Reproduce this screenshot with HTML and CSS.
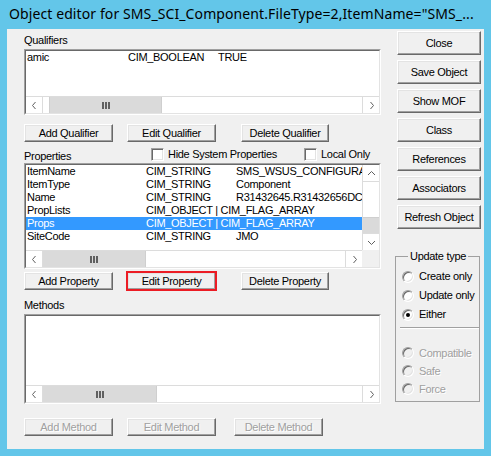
FILE: index.html
```html
<!DOCTYPE html>
<html lang="en">
<head>
<meta charset="utf-8">
<title>Object editor</title>
<link rel="stylesheet" href="styles.css">
</head>
<body>
<div class="window">
  <div class="titlebar">Object editor for SMS_SCI_Component.FileType=2,ItemName="SMS_...</div>
  <div class="client">
    <div class="left">
      <div class="label">Qualifiers</div>
      <div class="listbox qual">
        <div class="inner col">
          <div class="rows">
            <div class="row"><span class="qname">amic</span><span class="qtype">CIM_BOOLEAN</span><span class="val">TRUE</span></div>
          </div>
          <div class="hscroll">
            <span class="arrow aleft"><svg width="7" height="9" viewBox="0 0 7 9"><path d="M4.5 1 L1.5 4.5 L4.5 8" fill="none" stroke="#606060"/></svg></span>
            <span class="thumb thumb-qual"><svg width="8" height="7" viewBox="0 0 8 7"><rect x="0" y="0" width="2" height="7" fill="#606060"/><rect x="3" y="0" width="2" height="7" fill="#606060"/><rect x="6" y="0" width="2" height="7" fill="#606060"/></svg></span>
            <span class="track"></span>
            <span class="arrow aright"><svg width="7" height="9" viewBox="0 0 7 9"><path d="M2.5 1 L5.5 4.5 L2.5 8" fill="none" stroke="#606060"/></svg></span>
          </div>
        </div>
      </div>
      <div class="btnrow">
        <button class="btn">Add Qualifier</button>
        <button class="btn">Edit Qualifier</button>
        <button class="btn third">Delete Qualifier</button>
      </div>
      <div class="propshead">
        <span class="plabel">Properties</span>
        <label class="check hide"><span class="box"></span><span>Hide System Properties</span></label>
        <label class="check"><span class="box"></span><span>Local Only</span></label>
      </div>
      <div class="listbox props">
        <div class="inner grid">
          <div class="rows">
            <div class="row"><span class="pname">ItemName</span><span class="ptype">CIM_STRING</span><span class="val">SMS_WSUS_CONFIGURA</span></div>
            <div class="row"><span class="pname">ItemType</span><span class="ptype">CIM_STRING</span><span class="val">Component</span></div>
            <div class="row"><span class="pname">Name</span><span class="ptype">CIM_STRING</span><span class="val">R31432645.R31432656DC</span></div>
            <div class="row"><span class="pname">PropLists</span><span class="ptype">CIM_OBJECT | CIM_FLAG_ARRAY</span></div>
            <div class="row sel"><span class="pname">Props</span><span class="ptype">CIM_OBJECT | CIM_FLAG_ARRAY</span></div>
            <div class="row"><span class="pname">SiteCode</span><span class="ptype">CIM_STRING</span><span class="val">JMO</span></div>
          </div>
          <div class="vscroll">
            <span class="varrow aup"><svg width="9" height="7" viewBox="0 0 9 7"><path d="M1 5 L4.5 1.5 L8 5" fill="none" stroke="#606060"/></svg></span>
            <span class="track"></span>
            <span class="vthumb"></span>
            <span class="varrow adown"><svg width="9" height="7" viewBox="0 0 9 7"><path d="M1 2 L4.5 5.5 L8 2" fill="none" stroke="#606060"/></svg></span>
          </div>
          <div class="hscroll">
            <span class="arrow aleft"><svg width="7" height="9" viewBox="0 0 7 9"><path d="M4.5 1 L1.5 4.5 L4.5 8" fill="none" stroke="#606060"/></svg></span>
            <span class="thumb thumb-props"><svg width="8" height="7" viewBox="0 0 8 7"><rect x="0" y="0" width="2" height="7" fill="#606060"/><rect x="3" y="0" width="2" height="7" fill="#606060"/><rect x="6" y="0" width="2" height="7" fill="#606060"/></svg></span>
            <span class="track"></span>
            <span class="arrow aright"><svg width="7" height="9" viewBox="0 0 7 9"><path d="M2.5 1 L5.5 4.5 L2.5 8" fill="none" stroke="#606060"/></svg></span>
          </div>
          <div class="corner"></div>
        </div>
      </div>
      <div class="btnrow tight">
        <button class="btn">Add Property</button>
        <button class="btn marked">Edit Property</button>
        <button class="btn third">Delete Property</button>
      </div>
      <div class="label mlabel">Methods</div>
      <div class="listbox meth">
        <div class="inner col">
          <div class="rows"></div>
          <div class="hscroll">
            <span class="arrow aleft"><svg width="7" height="9" viewBox="0 0 7 9"><path d="M4.5 1 L1.5 4.5 L4.5 8" fill="none" stroke="#606060"/></svg></span>
            <span class="thumb thumb-meth"><svg width="8" height="7" viewBox="0 0 8 7"><rect x="0" y="0" width="2" height="7" fill="#606060"/><rect x="3" y="0" width="2" height="7" fill="#606060"/><rect x="6" y="0" width="2" height="7" fill="#606060"/></svg></span>
            <span class="track"></span>
            <span class="arrow aright"><svg width="7" height="9" viewBox="0 0 7 9"><path d="M2.5 1 L5.5 4.5 L2.5 8" fill="none" stroke="#606060"/></svg></span>
          </div>
        </div>
      </div>
      <div class="btnrow methods">
        <button class="btn" disabled>Add Method</button>
        <button class="btn" disabled>Edit Method</button>
        <button class="btn mthird" disabled>Delete Method</button>
      </div>
    </div>
    <div class="right">
      <button class="btn side">Close</button>
      <button class="btn side">Save Object</button>
      <button class="btn side">Show MOF</button>
      <button class="btn side">Class</button>
      <button class="btn side">References</button>
      <button class="btn side">Associators</button>
      <button class="btn side">Refresh Object</button>
      <fieldset class="group">
        <legend>Update type</legend>
        <div class="radio"><span class="dot"></span><span>Create only</span></div>
        <div class="radio"><span class="dot"></span><span>Update only</span></div>
        <div class="radio"><span class="dot on"></span><span>Either</span></div>
        <div class="sep"></div>
        <div class="radio dis"><span class="dot"></span><span>Compatible</span></div>
        <div class="radio dis"><span class="dot"></span><span>Safe</span></div>
        <div class="radio dis"><span class="dot"></span><span>Force</span></div>
      </fieldset>
    </div>
  </div>
</div>
</body>
</html>
```

FILE: styles.css
```css
* { box-sizing: border-box; }
html, body { margin: 0; padding: 0; }
body { background: #63c6e9; }

.window {
  width: 491px;
  height: 456px;
  background: #63c6e9;
  display: flex;
  flex-direction: column;
}

.titlebar {
  height: 29px;
  padding: 4px 0 0 9px;
  font-family: "Noto Sans", sans-serif;
  font-size: 14px;
  letter-spacing: 0.1px;
  line-height: 20px;
  color: #000;
  white-space: nowrap;
  overflow: hidden;
}

.client {
  margin: 0 7px;
  height: 420px;
  background: #f0f0f0;
  display: flex;
  font-family: "Liberation Sans", Arial, sans-serif;
  font-size: 11px;
  line-height: 13px;
  letter-spacing: -0.3px;
  color: #000;
}

.left {
  margin-left: 17px;
  width: 357px;
  display: flex;
  flex-direction: column;
}

.label { height: 20px; padding-top: 5px; }
.mlabel { height: 24px; padding-top: 9px; }

/* sunken list boxes */
.listbox {
  border: 1px solid;
  border-color: #a0a0a0 #fff #fff #a0a0a0;
  background: #fff;
}
.listbox .inner {
  height: 100%;
  border: 1px solid;
  border-color: #696969 #e3e3e3 #e3e3e3 #696969;
  background: #fff;
}
.qual { height: 66px; }
.props { height: 106px; }
.meth { height: 90px; }

.inner.col { display: flex; flex-direction: column; }
.inner.grid {
  display: grid;
  grid-template-columns: 1fr 17px;
  grid-template-rows: 1fr 17px;
}

.rows { flex: 1; overflow: hidden; min-width: 0; }
.row {
  height: 13px;
  display: flex;
  white-space: nowrap;
  overflow: hidden;
  padding-left: 1px;
}
.row span { flex: none; }
.qname { width: 101px; }
.qtype { width: 90px; }
.pname { width: 119px; }
.ptype { width: 90px; }
.row.sel { background: #3399ff; color: #fff; }

/* scrollbars */
.hscroll {
  height: 17px;
  display: flex;
  border-top: 1px solid #dcdcdc;
  background: #fff;
}
.arrow {
  width: 17px;
  flex: none;
  display: flex;
  align-items: center;
  justify-content: center;
  background: #fff;
}
.aleft { border-right: 1px solid #dcdcdc; }
.aright { border-left: 1px solid #dcdcdc; }
.thumb {
  flex: none;
  background: #dadada;
  display: flex;
  align-items: center;
  justify-content: center;
  border-right: 1px solid #cfcfcf;
}
.thumb-qual { width: 113px; margin-left: 6px; border-left: 1px solid #cfcfcf; }
.thumb-props { width: 103px; }
.thumb-meth { width: 114px; }
.track { flex: 1; }

.vscroll {
  display: flex;
  flex-direction: column;
  border-left: 1px solid #dcdcdc;
  background: #fff;
}
.varrow {
  height: 17px;
  flex: none;
  display: flex;
  align-items: center;
  justify-content: center;
}
.aup { border-bottom: 1px solid #dcdcdc; }
.adown { border-top: 1px solid #dcdcdc; }
.vthumb { height: 16px; flex: none; background: #dadada; border-top: 1px solid #cfcfcf; }
.corner { background: #f0f0f0; }

/* buttons */
.btnrow { display: flex; gap: 14px; margin-top: 9px; height: 18px; }
.btnrow.tight { margin-top: 3px; }
.btnrow.methods { margin-top: 14px; }
.btnrow .third { margin-left: 11px; width: 88px; }
.btnrow .mthird { margin-left: 4px; }

.btn {
  width: 89px;
  height: 18px;
  padding: 0;
  margin: 0;
  background: #f0f0f0;
  border: 1px solid;
  border-color: #fff #696969 #696969 #fff;
  box-shadow: inset -1px -1px 0 #a0a0a0, inset 1px 1px 0 #e3e3e3;
  font: inherit;
  letter-spacing: inherit;
  line-height: 13px;
  color: #000;
  white-space: nowrap;
}
.btn:disabled { color: #a0a0a0; text-shadow: 1px 1px 0 #fff; }
.btn.marked { outline: 2px solid #ec1c24; outline-offset: -1px; }

/* properties header */
.propshead { height: 21px; display: flex; padding-top: 6px; }
.plabel { width: 127px; padding-top: 2px; }
.check { display: flex; align-items: center; gap: 4px; height: 13px; }
.check.hide { width: 153px; }
.box {
  width: 13px;
  height: 13px;
  flex: none;
  background: #fff;
  border: 1px solid;
  border-color: #a0a0a0 #fff #fff #a0a0a0;
  box-shadow: inset 1px 1px 0 #696969, inset -1px -1px 0 #e3e3e3;
}

/* right column */
.right {
  margin-left: 14px;
  width: 86px;
  display: flex;
  flex-direction: column;
  gap: 5px;
  padding-top: 2px;
}
.btn.side { width: 84px; height: 24px; margin-left: 2px; }

.group {
  margin: 16px 0 0 0;
  width: 85px;
  padding: 4px 0 3px 6px;
  border: 1px solid #a0a0a0;
  min-width: 0;
}
.group legend {
  padding: 0 2px;
  margin-left: 6px;
  line-height: 13px;
}
.radio { height: 19px; display: flex; align-items: center; gap: 5px; white-space: nowrap; }
.radio.dis { height: 18px; color: #a0a0a0; text-shadow: 1px 1px 0 #fff; }
.dot {
  width: 12px;
  height: 12px;
  flex: none;
  border-radius: 50%;
  border: 1px solid;
  border-color: #a0a0a0 #fff #fff #a0a0a0;
  box-shadow: inset 1px 1px 0 #696969, inset -1px -1px 0 #e3e3e3;
  background: #fff;
  display: flex;
  align-items: center;
  justify-content: center;
}
.radio.dis .dot { background: #f0f0f0; }
.dot.on::after {
  content: "";
  width: 4px;
  height: 4px;
  border-radius: 50%;
  background: #000;
}
.sep {
  margin: 3px 0 15px -2px;
  height: 2px;
  border-top: 1px solid #a0a0a0;
  border-bottom: 1px solid #fff;
}
```
